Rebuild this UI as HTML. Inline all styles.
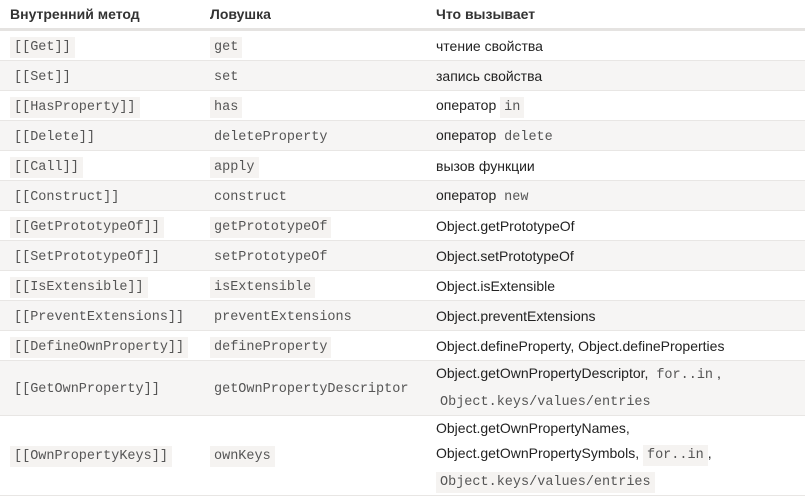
<!DOCTYPE html>
<html><head><meta charset="utf-8"><style>
body{margin:0;background:#fff;width:811px;height:500px;overflow:hidden;font-family:"Liberation Sans",sans-serif;font-size:14px;color:#222}
table{border-collapse:collapse;position:absolute;left:0;top:0;width:805px}
th{text-align:left;font-weight:bold;font-size:14px;height:28px;padding:0 0 0 10px;border-bottom:3px solid #e5e3e1;color:#333}
td{padding:0 0 0 10px;height:29px;border-bottom:1px solid #e8e6e4;vertical-align:middle}
tr.g td{background:#f6f5f4}
code{font-family:"Liberation Mono",monospace;font-size:13.5px;color:#555;background:#f5f3f1;padding:3px 4px}
tr.g code{background:#f6f5f4}
td.c1{width:194px}td.c2{width:212px;padding-left:6px}td.c3{padding-left:14px}
th.h3{padding-left:14px}
td.tall{height:53px;line-height:25px}
td.tall3{height:77px;line-height:25px}
</style></head><body>
<table>
<tr><th style="width:194px">Внутренний метод</th><th style="width:212px;padding-left:6px">Ловушка</th><th class="h3">Что вызывает</th></tr>
<tr><td class="c1"><code>[[Get]]</code></td><td class="c2"><code>get</code></td><td class="c3">чтение свойства</td></tr>
<tr class="g"><td class="c1"><code>[[Set]]</code></td><td class="c2"><code>set</code></td><td class="c3">запись свойства</td></tr>
<tr><td class="c1"><code>[[HasProperty]]</code></td><td class="c2"><code>has</code></td><td class="c3">оператор <code>in</code></td></tr>
<tr class="g"><td class="c1"><code>[[Delete]]</code></td><td class="c2"><code>deleteProperty</code></td><td class="c3">оператор <code>delete</code></td></tr>
<tr><td class="c1"><code>[[Call]]</code></td><td class="c2"><code>apply</code></td><td class="c3">вызов функции</td></tr>
<tr class="g"><td class="c1"><code>[[Construct]]</code></td><td class="c2"><code>construct</code></td><td class="c3">оператор <code>new</code></td></tr>
<tr><td class="c1"><code>[[GetPrototypeOf]]</code></td><td class="c2"><code>getPrototypeOf</code></td><td class="c3">Object.getPrototypeOf</td></tr>
<tr class="g"><td class="c1"><code>[[SetPrototypeOf]]</code></td><td class="c2"><code>setPrototypeOf</code></td><td class="c3">Object.setPrototypeOf</td></tr>
<tr><td class="c1"><code>[[IsExtensible]]</code></td><td class="c2"><code>isExtensible</code></td><td class="c3">Object.isExtensible</td></tr>
<tr class="g"><td class="c1"><code>[[PreventExtensions]]</code></td><td class="c2"><code>preventExtensions</code></td><td class="c3">Object.preventExtensions</td></tr>
<tr><td class="c1"><code>[[DefineOwnProperty]]</code></td><td class="c2"><code>defineProperty</code></td><td class="c3">Object.defineProperty, Object.defineProperties</td></tr>
<tr class="g"><td class="c1 tall"><code>[[GetOwnProperty]]</code></td><td class="c2 tall"><code>getOwnPropertyDescriptor</code></td><td class="c3 tall">Object.getOwnPropertyDescriptor, <code>for..in</code>,<br><code>Object.keys/values/entries</code></td></tr>
<tr><td class="c1 tall3"><code>[[OwnPropertyKeys]]</code></td><td class="c2 tall3"><code>ownKeys</code></td><td class="c3 tall3">Object.getOwnPropertyNames,<br>Object.getOwnPropertySymbols, <code>for..in</code>,<br><code>Object.keys/values/entries</code></td></tr>
</table>
</body></html>
